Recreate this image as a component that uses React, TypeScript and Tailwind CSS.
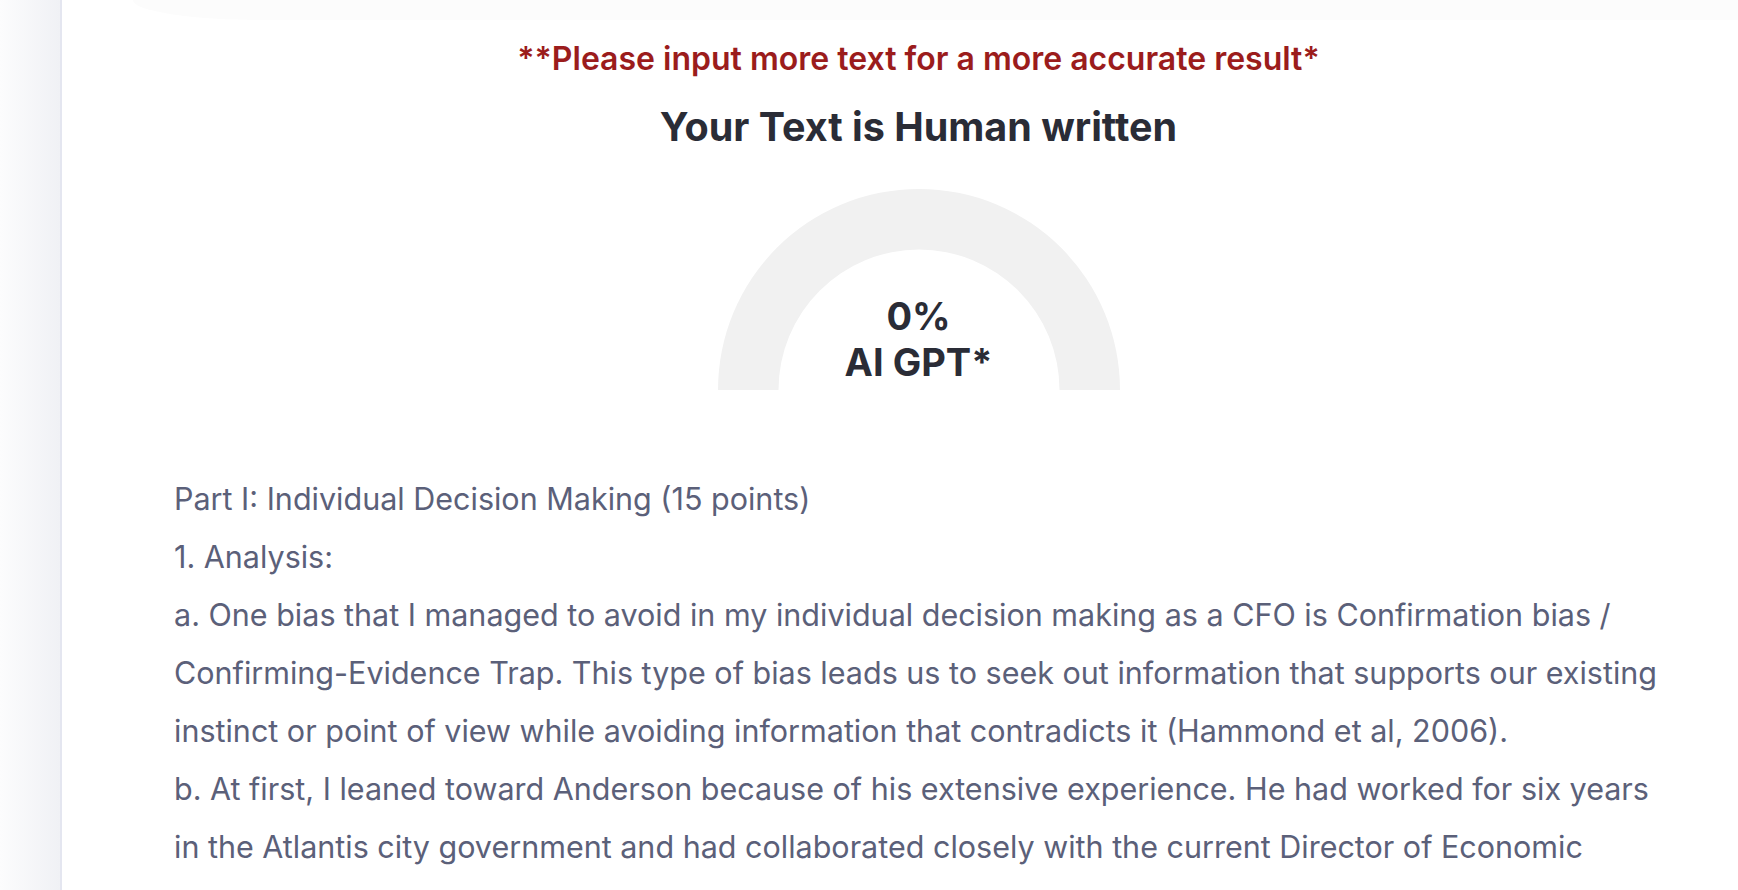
import React from "react";

const lines = [
  "Part I: Individual Decision Making (15 points)",
  "1. Analysis:",
  "a. One bias that I managed to avoid in my individual decision making as a CFO is Confirmation bias /",
  "Confirming-Evidence Trap. This type of bias leads us to seek out information that supports our existing",
  "instinct or point of view while avoiding information that contradicts it (Hammond et al, 2006).",
  "b. At first, I leaned toward Anderson because of his extensive experience. He had worked for six years",
  "in the Atlantis city government and had collaborated closely with the current Director of Economic",
];

function Gauge() {
  return (
    <div className="relative w-[402px] h-[201px]">
      <svg width="402" height="201" viewBox="0 0 402 201" className="block">
        <path
          d="M 0 201 A 201 201 0 0 1 402 201 L 341.5 201 A 140.5 140.5 0 0 0 60.5 201 Z"
          fill="#f1f1f1"
        />
      </svg>
      <div className="absolute left-0 right-0 top-[104px] flex flex-col items-center text-[38px] leading-[46px] font-bold text-[#2a2c36]">
        <span>0%</span>
        <span>AI GPT*</span>
      </div>
    </div>
  );
}

export default function App() {
  return (
    <div
      className="relative flex h-[890px] w-full overflow-hidden bg-white"
      style={{ fontFamily: "Inter, 'Noto Sans', sans-serif" }}
    >
      <div className="absolute left-[133px] right-0 top-0 h-[20px] bg-[#fcfcfc] rounded-bl-[130px_20px]" />
      <aside className="w-[62px] shrink-0 border-r-2 border-[#e4e6f0] bg-gradient-to-r from-[#fcfcfd] to-[#f0f1f5]" />
      <main className="relative flex-1 pl-[112px] pr-[75px] pt-[39px]">
        <div className="flex flex-col items-center">
          <p className="text-[32px] leading-[40px] font-semibold text-[#9b1c1c]">
            **Please input more text for a more accurate result*
          </p>
          <h2 className="mt-[24px] text-[39.5px] leading-[48px] font-bold text-[#2a2c36]">
            Your Text is Human written
          </h2>
          <div className="mt-[38px]">
            <Gauge />
          </div>
        </div>
        <div className="mt-[80px] text-[30.5px] leading-[58px] text-[#5b6079] whitespace-nowrap">
          {lines.map((l, i) => (
            <div key={i}>{l}</div>
          ))}
        </div>
      </main>
    </div>
  );
}
